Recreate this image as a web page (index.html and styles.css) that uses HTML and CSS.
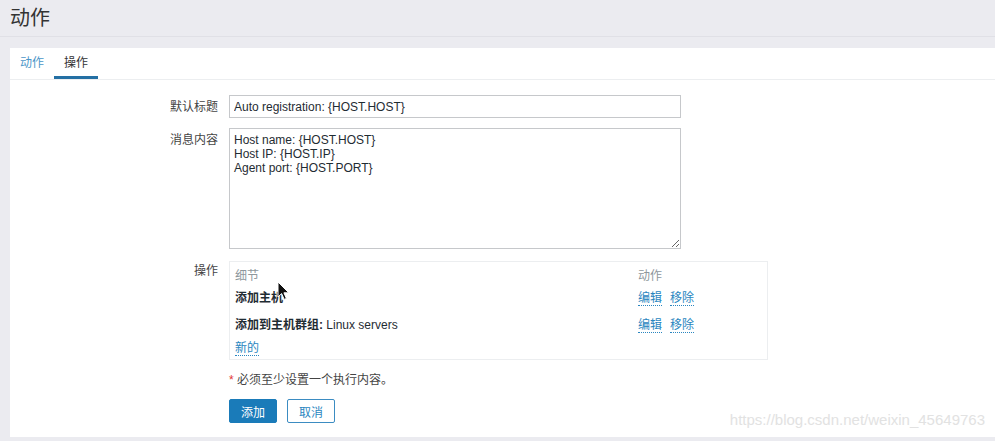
FILE: index.html
```html
<!DOCTYPE html>
<html lang="zh">
<head>
<meta charset="utf-8">
<title>动作</title>
<link rel="stylesheet" href="styles.css">
</head>
<body>
<header class="page-header">
  <h1 class="page-title">动作</h1>
</header>
<main class="card">
  <nav class="tabs">
    <a class="tab">动作</a>
    <a class="tab tab-active">操作</a>
  </nav>
  <form class="form">
    <label class="form-label">默认标题</label>
    <div class="form-field">
      <input class="text-input" type="text" value="Auto registration: {HOST.HOST}">
    </div>
    <label class="form-label">消息内容</label>
    <div class="form-field">
      <textarea class="text-area">Host name: {HOST.HOST}
Host IP: {HOST.IP}
Agent port: {HOST.PORT}</textarea>
    </div>
    <label class="form-label">操作</label>
    <div class="form-field">
      <div class="ops-box">
        <div class="ops-row ops-head">
          <span>细节</span>
          <span>动作</span>
        </div>
        <div class="ops-row ops-first">
          <span class="ops-detail"><b>添加主机</b></span>
          <span class="ops-actions"><a class="link">编辑</a><a class="link">移除</a></span>
        </div>
        <div class="ops-row ops-second">
          <span class="ops-detail"><b>添加到主机群组:</b> Linux servers</span>
          <span class="ops-actions"><a class="link">编辑</a><a class="link">移除</a></span>
        </div>
        <div class="ops-new"><a class="link">新的</a></div>
      </div>
    </div>
    <div class="form-label"></div>
    <div class="form-field">
      <p class="required-note"><span class="asterisk">*</span> 必须至少设置一个执行内容。</p>
      <div class="buttons">
        <button type="button" class="btn btn-primary">添加</button>
        <button type="button" class="btn btn-alt">取消</button>
      </div>
    </div>
  </form>
  <svg class="cursor" width="13" height="20" viewBox="0 0 13 20" aria-hidden="true">
    <path d="M1 1 L1 16 L4.6 12.6 L7.2 18.4 L9.4 17.4 L6.9 11.8 L11.8 11.8 Z" fill="#111" stroke="#fff" stroke-width="1"/>
  </svg>
  <div class="watermark">https://blog.csdn.net/weixin_45649763</div>
</main>
</body>
</html>
```
FILE: styles.css
```css
html, body {
  margin: 0;
  padding: 0;
}
body {
  background: #ebebf0;
  font-family: "Liberation Sans", Arial, "Noto Sans CJK SC", sans-serif;
  font-size: 12px;
  color: #1f2c33;
  width: 995px;
  height: 441px;
  overflow: hidden;
}
.page-header {
  height: 36px;
  border-bottom: 1px solid #e0e0e6;
  padding-left: 10px;
  box-sizing: content-box;
}
.page-title {
  margin: 0;
  padding-top: 6px;
  font-size: 20px;
  line-height: 24px;
  font-weight: normal;
  color: #333;
}
.card {
  position: relative;
  margin: 11px 0 0 10px;
  background: #fff;
  height: 389px;
  box-sizing: border-box;
}
.tabs {
  display: flex;
  height: 32px;
  border-bottom: 1px solid #eceef0;
  box-sizing: border-box;
}
.tab {
  display: block;
  width: 44px;
  box-sizing: border-box;
  padding: 8px 10px 0;
  line-height: 14px;
  height: 31px;
  color: #4b96c8;
  text-align: center;
}
.tab-active {
  color: #333;
  border-bottom: 3px solid #2470a4;
}
.form {
  display: grid;
  grid-template-columns: 208px 452px;
  column-gap: 11px;
  row-gap: 10px;
  padding-top: 15px;
}
.form-label {
  text-align: right;
  padding-top: 5px;
  line-height: 14px;
  color: #444;
}
.form-field {
  min-width: 0;
}
.text-input {
  display: block;
  width: 452px;
  height: 23px;
  box-sizing: border-box;
  border: 1px solid #c6c8cb;
  padding: 0 4px;
  font: inherit;
  color: #1f2c33;
  background: #fff;
  margin: 0;
}
.text-area {
  display: block;
  width: 452px;
  height: 121px;
  box-sizing: border-box;
  border: 1px solid #c6c8cb;
  padding: 4px 4px;
  font: inherit;
  line-height: 14px;
  color: #1f2c33;
  background: #fff;
  margin: 0;
}
.ops-box {
  margin-top: 2px;
  width: 539px;
  height: 99px;
  box-sizing: border-box;
  border: 1px solid #eceef0;
  padding: 7px 5px 0;
}
.ops-row {
  display: grid;
  grid-template-columns: 403px auto;
  line-height: 14px;
}
.ops-head {
  color: #8e979c;
}
.ops-first {
  margin-top: 8px;
}
.ops-second {
  margin-top: 12px;
}
.ops-detail b {
  font-weight: bold;
  color: #1f2c33;
}
.ops-actions {
  display: flex;
  gap: 8px;
}
.ops-new {
  margin-top: 8px;
  line-height: 14px;
}
.link {
  color: #2a86c0;
  border-bottom: 1px dotted #2a86c0;
  cursor: pointer;
}
.required-note {
  margin: 3px 0 0;
  line-height: 14px;
  color: #444;
}
.asterisk {
  color: #e33734;
}
.buttons {
  display: flex;
  gap: 10px;
  margin-top: 12px;
}
.btn {
  width: 48px;
  height: 24px;
  box-sizing: border-box;
  font: inherit;
  border-radius: 2px;
  padding: 0;
  margin: 0;
}
.btn-primary {
  background: #1a7bb9;
  border: 1px solid #1a7bb9;
  color: #fff;
}
.btn-alt {
  background: #fff;
  border: 1px solid #3b8cc2;
  color: #2a86c0;
}
.cursor {
  position: absolute;
  left: 267px;
  top: 233px;
}
.watermark {
  position: absolute;
  right: 10px;
  bottom: 8px;
  font-size: 15px;
  line-height: 18px;
  color: #e2e2e2;
  font-family: "Liberation Sans", Arial, sans-serif;
}
```
